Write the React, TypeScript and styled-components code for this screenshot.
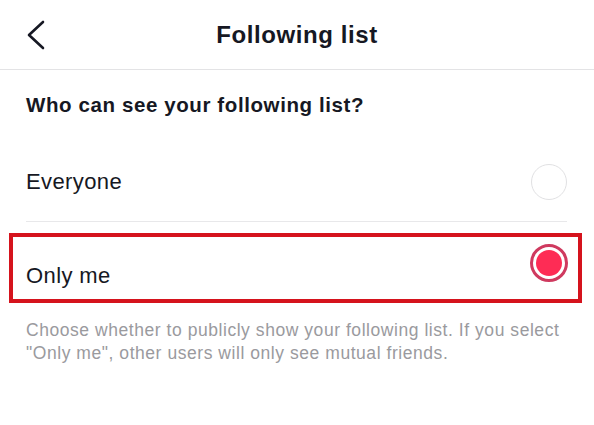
import styled, { createGlobalStyle } from 'styled-components';

const GlobalStyle = createGlobalStyle`
    html, body {
        margin: 0;
        padding: 0;
        background: #ffffff;
    }
    body {
        font-family: 'Liberation Sans', Arial, sans-serif;
        color: #161823;
    }
`;

interface OptionProps {
    label: string;
    selected?: boolean;
    highlighted?: boolean;
}

const Option = ({ label, selected, highlighted }: OptionProps) => {
    if (highlighted) {
        return (
            <HighlightBox>
                <SelectedLabel>{label}</SelectedLabel>
                <SelectedRadio>
                    <RadioDot />
                </SelectedRadio>
            </HighlightBox>
        );
    }

    return (
        <OptionRow>
            <OptionLabel>{label}</OptionLabel>
            {selected ? (
                <SelectedRadio>
                    <RadioDot />
                </SelectedRadio>
            ) : (
                <EmptyRadio />
            )}
        </OptionRow>
    );
};

const App = () => {
    return (
        <>
            <GlobalStyle />
            <Page>
                <Header>
                    <BackButton aria-label="Back">
                        <svg width="20" height="30" viewBox="0 0 20 30">
                            <polyline
                                points="17,2 3,15 17,28"
                                fill="none"
                                stroke="#161823"
                                strokeWidth="2.6"
                                strokeLinecap="round"
                                strokeLinejoin="round"
                            />
                        </svg>
                    </BackButton>
                    <Title>Following list</Title>
                    <span />
                </Header>
                <SectionTitle>Who can see your following list?</SectionTitle>
                <Option label="Everyone" />
                <Divider />
                <Option label="Only me" selected highlighted />
                <Description>
                    Choose whether to publicly show your following list. If you
                    select "Only me", other users will only see mutual friends.
                </Description>
            </Page>
        </>
    );
};

const Page = styled.div`
    width: 594px;
    min-height: 425px;
    background: #ffffff;
`;

const Header = styled.header`
    display: grid;
    grid-template-columns: 1fr auto 1fr;
    align-items: center;
    height: 69px;
    border-bottom: 1px solid #e3e3e5;
`;

const BackButton = styled.button`
    display: flex;
    align-items: center;
    justify-self: start;
    margin-left: 26px;
    padding: 0;
    border: none;
    background: none;
    margin-top: 1px;
`;

const Title = styled.h1`
    margin: 0;
    font-size: 24px;
    font-weight: 700;
    letter-spacing: 0.6px;
    line-height: 28px;
`;

const SectionTitle = styled.h2`
    margin: 23px 26px 0;
    font-size: 20.5px;
    font-weight: 700;
    letter-spacing: 0.6px;
    line-height: 24px;
`;

const OptionRow = styled.div`
    display: flex;
    align-items: center;
    justify-content: space-between;
    height: 78px;
    margin-top: 26px;
    padding: 0 26px 0 26px;
`;

const OptionLabel = styled.span`
    font-size: 22px;
    letter-spacing: 0.4px;
    line-height: 26px;
`;

const Divider = styled.div`
    height: 1px;
    margin: 0 27px 0 26px;
    background: #e8e8ea;
`;

const HighlightBox = styled.div`
    display: flex;
    justify-content: space-between;
    height: 62px;
    margin: 11px 12px 0 9px;
    padding: 0 10px 0 13px;
    border: 4px solid #d5131d;
`;

const SelectedLabel = styled(OptionLabel)`
    align-self: flex-end;
    margin-bottom: 10px;
`;

const EmptyRadio = styled.span`
    box-sizing: border-box;
    width: 36px;
    height: 36px;
    margin-right: 1px;
    border: 1.5px solid #e1e1e3;
    border-radius: 50%;
`;

const SelectedRadio = styled.span`
    box-sizing: border-box;
    display: flex;
    align-items: center;
    justify-content: center;
    align-self: flex-start;
    width: 38px;
    height: 38px;
    margin-top: 7px;
    border: 3px solid #cf3a5f;
    border-radius: 50%;
`;

const RadioDot = styled.span`
    width: 26px;
    height: 26px;
    border-radius: 50%;
    background: #fe2c55;
`;

const Description = styled.p`
    margin: 16px 26px 0;
    font-size: 17.5px;
    letter-spacing: 0.55px;
    line-height: 23px;
    color: #9a9a9e;
`;

export default App;
